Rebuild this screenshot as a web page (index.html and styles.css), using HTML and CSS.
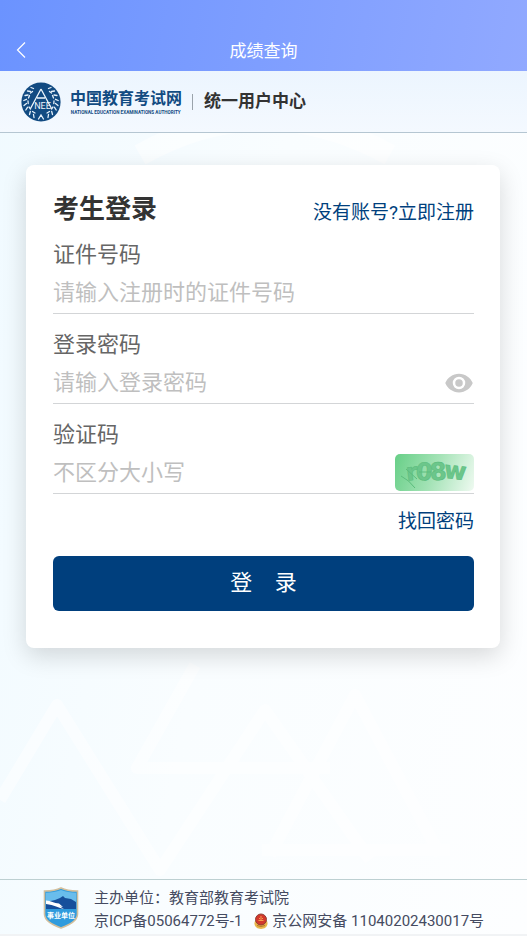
FILE: index.html
```html
<!DOCTYPE html>
<html lang="zh-CN">
<head>
  <meta charset="UTF-8" />
  <meta name="viewport" content="width=device-width, initial-scale=1.0" />
  <title>成绩查询</title>
  <link rel="stylesheet" href="styles.css">
</head>
<body>

  <svg class="page-bg" viewBox="0 0 527 936" preserveAspectRatio="xMidYMid slice" aria-hidden="true">
    <g fill="none" stroke="#fff" stroke-width="12" stroke-linejoin="round" opacity=".5">
      <path d="M0 800 57 705 160 870 265 710 370 860" />
      <path d="M195 665 137 768H330M270 855 355 695 440 855M262 850H450" />
      <path d="M140 155Q264 85 390 155" stroke-width="22" />
    </g>
  </svg>

  <!-- 顶部导航 -->
  <div class="nav-bar">
    <button type="button" class="back-btn" aria-label="返回">
      <svg width="10" height="18" viewBox="0 0 10 18" fill="none" stroke="#fff" stroke-width="1.2"><path d="M9 1.500 1.500 9 9 16.500" /></svg>
    </button>
    <div class="nav-title">成绩查询</div>
  </div>

  <!-- 站点标识 -->
  <header class="site-header">
    <svg class="logo-img" viewBox="0 0 40 40" aria-hidden="true">
      <circle cx="20" cy="20" r="19.6" fill="#124b82" />
      <!-- 麦穗 -->
      <g fill="none" stroke="#e6f1fa" stroke-width="1.300" stroke-linecap="round">
        <path d="M10 5.500l2.500 1M6.500 9l3 .5M4 13.500l3-.5M2.800 18.500l2.700-1.200M3 23.500l2.500-2M4.800 28l1.700-2.700M8.500 32.500l.8-3M13 35.500l-.5-3" />
        <path d="M30 5.500l-2.500 1M33.500 9l-3 .5M36 13.500l-3-.5M37.200 18.500l-2.700-1.200M37 23.500l-2.500-2M35.200 28l-1.700-2.700M31.500 32.500l-.8-3M27 35.500l.5-3" />
        <path d="M11.500 9.500l-2 1.500M8.500 13.500 7.500 16M7 19l.2 2.500M8 25l1.500 2M11.500 29.500l2.500 1.500" />
        <path d="M28.500 9.500l2 1.500M31.500 13.500l1 2.500M33 19l-.2 2.500M32 25l-1.500 2M28.500 29.500 26 31" />
        <path d="M17.500 37l2.500-4 2.500 4" />
      </g>
      <path d="M20 7 9.500 26.500M20 7l10.500 19.500M16 16h8" fill="none" stroke="#eef6fc" stroke-width="1.300" />
      <text x="21.500" y="27" text-anchor="middle" class="logo-letters">NEE</text>
    </svg>
    <div class="logo-text">
      <span class="logo-cn">中国教育考试网</span>
      <svg class="logo-en" viewBox="0 0 239 13">
        <text x="0" y="10">NATIONAL EDUCATION EXAMINATIONS AUTHORITY</text>
      </svg>
    </div>
    <span class="divider"></span>
    <span class="sub-title">统一用户中心</span>
  </header>

  <!-- 登录表单 -->
  <main>
    <form class="login-card" onsubmit="event.preventDefault();">
      <div class="card-head">
        <h1>考生登录</h1>
        <a href="#">没有账号?立即注册</a>
      </div>

      <div class="field">
        <label for="idno">证件号码</label>
        <div class="input-row">
          <input type="text" id="idno" name="idno" placeholder="请输入注册时的证件号码" />
        </div>
      </div>

      <div class="field">
        <label for="password">登录密码</label>
        <div class="input-row">
          <input type="password" id="password" name="password" placeholder="请输入登录密码" />
          <button type="button" class="eye-btn" aria-label="显示密码" onclick="togglePassword()">
            <svg width="30" height="30" viewBox="0 0 24 24" fill="#c8c8c8"><path d="M12 4.500C7 4.500 2.730 7.610 1 12c1.730 4.390 6 7.500 11 7.500s9.270-3.110 11-7.500c-1.730-4.390-6-7.500-11-7.500zM12 17a5 5 0 1 1 0-10 5 5 0 0 1 0 10zm0-8a3 3 0 1 0 0 6 3 3 0 0 0 0-6z" /></svg>
          </button>
        </div>
      </div>

      <div class="field">
        <label for="captcha">验证码</label>
        <div class="input-row">
          <input type="text" id="captcha" name="captcha" placeholder="不区分大小写" />
          <button type="button" class="captcha" aria-label="换一张验证码">
            <svg width="79" height="37" viewBox="0 0 79 37">
              <g fill="#6cc68b" stroke="#5bbd7d" stroke-width=".6" font-family="DejaVu Sans, sans-serif" font-size="24" font-weight="bold">
                <text x="11" y="26" transform="rotate(-6 18 20)">r</text>
                <text x="21" y="26" transform="rotate(5 30 18)">0</text>
                <text x="35" y="26" transform="rotate(-4 44 18)">8</text>
                <text x="49" y="25" transform="rotate(6 60 20)">w</text>
              </g>
              <path d="M6 22q8 4 14 12M11 15l11 10M24 18h12" fill="none" stroke="#5bbd7d" />
            </svg>
          </button>
        </div>
      </div>

      <a class="forgot" href="#">找回密码</a>
      <button type="submit" class="login-btn">登&emsp;录</button>
    </form>
  </main>

  <!-- 页脚 -->
  <footer class="site-footer">
    <svg class="badge" viewBox="0 0 36 42" aria-hidden="true">
      <path d="M18 1C13 3.500 7 4 1.500 4v23c0 7 8 10.500 16.500 14 8.500-3.500 16.500-7 16.500-14V4C29 4 23 3.500 18 1z" fill="#2f9bdd" stroke="#d3bf9c" stroke-width="1.600" />
      <path d="M18 3C13 5 8 5.700 3 5.800V16h30V5.800C28 5.700 23 5 18 3z" fill="#69bdec" />
      <path d="M3 15l9-2 5-2 3-2 2 2 6 1 5 3v7H3z" fill="#164f9b" />
      <path d="M3 13.500c5 0 8 3 13 3l4 3.500-3-.5 4 2.500c-5-1-10-4-18-5z" fill="#fff" />
      <text x="18" y="31" text-anchor="middle" class="badge-text">事业单位</text>
    </svg>
    <div class="footer-text">
      <p>主办单位：教育部教育考试院</p>
      <p class="records">
        <span>京ICP备05064772号-1</span>
        <svg width="14" height="16" viewBox="0 0 14 16" aria-hidden="true">
          <path d="M1 8c-2 5 2 8 6 8s8-3 6-8z" fill="#e9b64c" />
          <circle cx="7" cy="6.500" r="5.500" fill="#d3382c" stroke="#8f4035" />
          <path d="M7 3v4M4.500 7.500h5M5 5l1 1M9 5 8 6" stroke="#f5a04e" />
          <path d="M3 12.500q4 2 8 0" fill="none" stroke="#b57b25" />
        </svg>
        <span>京公网安备 11040202430017号</span>
      </p>
    </div>
  </footer>

  <script>
    function togglePassword() {
      const input = document.getElementById('password');
      input.type = input.type === 'password' ? 'text' : 'password';
    }
  </script>

</body>
</html>
```
FILE: styles.css
```css
* {
  box-sizing: border-box;
}
body {
  margin: 0;
  min-height: 100vh;
  display: flex;
  flex-direction: column;
  position: relative;
  font-family: Roboto, "Noto Sans CJK SC", sans-serif;
  background: linear-gradient(100deg, #f0faff 0%, #f9fdff 45%, #fdfeff 100%);
}
h1, p {
  margin: 0;
}
a {
  color: #003f7d;
  font-size: 19px;
  line-height: 28px;
  text-decoration: none;
}
button {
  border: 0;
  padding: 0;
  background: none;
  font-family: inherit;
  cursor: pointer;
}
svg {
  display: block;
}
.page-bg {
  position: absolute;
  inset: 0;
  width: 100%;
  height: 100%;
  z-index: -1;
}

/* nav */
.nav-bar {
  display: grid;
  grid-template-columns: 42px 1fr 42px;
  align-items: center;
  padding-top: 28px;
  height: 71px;
  background: linear-gradient(100deg, #6b93ff, #91a9ff);
}
.back-btn {
  padding: 0 16px;
}
.nav-title {
  color: #fff;
  font-size: 17px;
  text-align: center;
}

/* header */
.site-header {
  display: flex;
  align-items: center;
  height: 62px;
  padding: 0 21px;
  background: linear-gradient(#ecf5fe, #f4f9ff);
  border-bottom: 1px solid #b5c6d2;
}
.logo-img {
  width: 40px;
  height: 40px;
  margin-right: 9px;
}
.logo-letters {
  fill: #eef6fc;
  font-size: 9px;
}
.logo-text {
  display: flex;
  flex-direction: column;
  color: #124b82;
  font-weight: bold;
}
.logo-cn {
  font-size: 16px;
  line-height: 20px;
}
.logo-en {
  width: 112px;
  height: 6px;
  fill: #124b82;
  font-size: 10px;
}
.divider {
  width: 1px;
  height: 16px;
  margin: 0 11px 0 10px;
  background: #9aa3ab;
}
.sub-title {
  padding-bottom: 4px;
  color: #333;
  font-size: 17px;
  font-weight: bold;
}

/* card */
main {
  flex: 1;
  padding: 32px 27px 32px 26px;
}
.login-card {
  display: flex;
  flex-direction: column;
  padding: 27px 26px 37px 27px;
  background: #fff;
  border-radius: 8px;
  box-shadow: 0 8px 24px rgba(0, 0, 0, .15);
}
.card-head {
  display: flex;
  justify-content: space-between;
  align-items: flex-end;
  margin-bottom: 10px;
}
.card-head a {
  line-height: 26px;
}
h1 {
  color: #333;
  font-size: 26px;
  line-height: 34px;
}
.field {
  height: 90px;
  padding-top: 4px;
}
.field label {
  display: block;
  color: #666;
  font-size: 22px;
  line-height: 30px;
}
.input-row {
  display: flex;
  align-items: center;
  height: 44px;
  padding-top: 2px;
  border-bottom: 1px solid #d3d5d7;
}
.input-row input {
  flex: 1;
  min-width: 0;
  padding: 0;
  border: 0;
  outline: 0;
  background: none;
  color: #333;
  font-family: inherit;
  font-size: 22px;
}
.input-row input::placeholder {
  color: #bfbfbf;
}
.captcha {
  border-radius: 5px;
  background: linear-gradient(110deg, #67cf87, #a5e3b7 50%, #effaf1);
}
.forgot {
  align-self: flex-end;
  padding-top: 2px;
  margin-bottom: 20px;
}
.login-btn {
  height: 55px;
  padding-bottom: 8px;
  border-radius: 6px;
  background: #003f7d;
  color: #fff;
  font-size: 22px;
}

/* footer */
.site-footer {
  display: flex;
  align-items: center;
  gap: 15px;
  height: 57px;
  padding: 2px 16px 0 43px;
  border-top: 1px solid #bdd0d2;
  border-bottom: 2px solid #f1f3f5;
}
.badge {
  width: 36px;
  height: 42px;
}
.badge-text {
  fill: #fff;
  font-size: 7px;
  font-weight: bold;
}
.footer-text {
  padding-top: 3px;
  color: #454b61;
  font-size: 15px;
  line-height: 23px;
  white-space: nowrap;
}
.records {
  display: flex;
  align-items: center;
}
.records svg {
  margin: 0 4px 0 12px;
}
```
